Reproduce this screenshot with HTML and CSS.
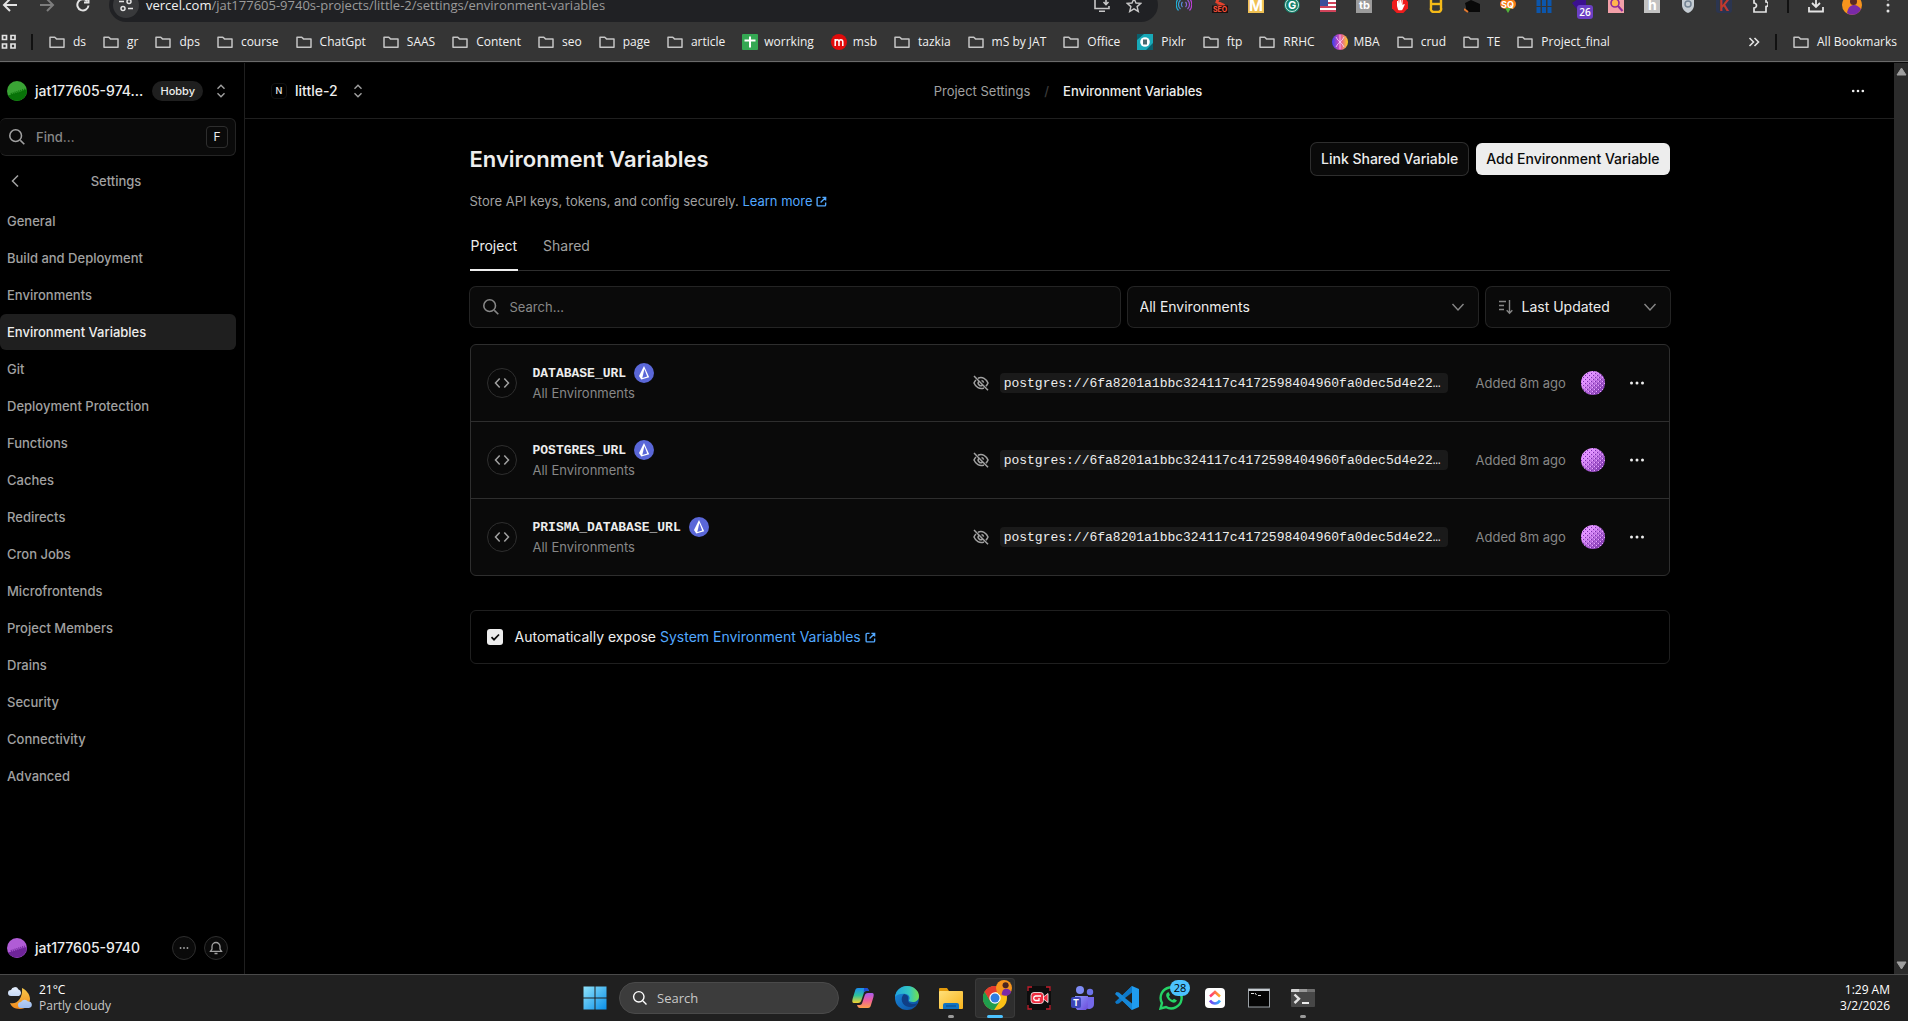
FILE: index.html
```html
<!DOCTYPE html>
<html lang="en">
<head>
<meta charset="utf-8">
<title>Environment Variables – little-2</title>
<link rel="stylesheet" href="styles.css">
</head>
<body>
<svg class="defs" aria-hidden="true">
  <defs>
    <linearGradient id="g-win" x1="0" y1="0" x2="1" y2="1"><stop offset="0" stop-color="#8fe3fb"/><stop offset="1" stop-color="#0a8fe8"/></linearGradient>
    <linearGradient id="g-purple" x1="0" y1="0" x2="1" y2="1"><stop offset="0.3" stop-color="#e08fff"/><stop offset="1" stop-color="#6f2aa0"/></linearGradient>
    <linearGradient id="g-file" x1="0" y1="0" x2="1" y2="1"><stop offset="0" stop-color="#ffe07a"/><stop offset="1" stop-color="#f9b41b"/></linearGradient>
    <linearGradient id="g-edge" x1="0" y1="0" x2="1" y2="0"><stop offset="0" stop-color="#1fa3e0"/><stop offset="0.6" stop-color="#34c8c0"/><stop offset="1" stop-color="#74e04b"/></linearGradient>
    <linearGradient id="g-edge2" x1="0" y1="0" x2="1" y2="1"><stop offset="0" stop-color="#1b8fe0"/><stop offset="1" stop-color="#0b4a9c"/></linearGradient>
    <linearGradient id="g-cop1" x1="0" y1="0" x2="0" y2="1"><stop offset="0" stop-color="#1a8df0"/><stop offset="0.5" stop-color="#2fc49a"/><stop offset="1" stop-color="#f5d32e"/></linearGradient>
    <linearGradient id="g-cop2" x1="0" y1="0" x2="0" y2="1"><stop offset="0" stop-color="#a95cf0"/><stop offset="0.5" stop-color="#f0609a"/><stop offset="1" stop-color="#ffa04a"/></linearGradient>
    <linearGradient id="g-teams" x1="0" y1="0" x2="1" y2="1"><stop offset="0" stop-color="#8fa0ff"/><stop offset="1" stop-color="#6a45d8"/></linearGradient>
    <linearGradient id="g-moon" x1="0" y1="0" x2="0" y2="1"><stop offset="0" stop-color="#f6c84a"/><stop offset="1" stop-color="#f08a1d"/></linearGradient>
    <linearGradient id="g-cloud" x1="0" y1="0" x2="0" y2="1"><stop offset="0" stop-color="#e6effc"/><stop offset="1" stop-color="#9dbdf0"/></linearGradient>
    <linearGradient id="g-mba" x1="0" y1="0" x2="1" y2="0"><stop offset="0" stop-color="#3b3df0"/><stop offset="0.5" stop-color="#e04bb0"/><stop offset="1" stop-color="#ffd21f"/></linearGradient>
    <linearGradient id="g-cast" x1="0" y1="0" x2="1" y2="0"><stop offset="0" stop-color="#19b7d8"/><stop offset="1" stop-color="#c43bd8"/></linearGradient>
    <linearGradient id="g-up" x1="0" y1="0" x2="1" y2="0"><stop offset="0" stop-color="#ff2f7d"/><stop offset="1" stop-color="#ffb21f"/></linearGradient>
    <linearGradient id="g-down" x1="0" y1="0" x2="1" y2="0"><stop offset="0" stop-color="#7a3df0"/><stop offset="1" stop-color="#2fb4ff"/></linearGradient>
    <pattern id="p-dots" width="4" height="4" patternUnits="userSpaceOnUse"><path d="M0 0h1v1H0zM2 2h1v1H2z" fill="#7b2fb0"/><path d="M3 0h1v1H3zM1 2h1v1H1z" fill="#e8a5ff"/></pattern>
    <symbol id="i-folder" viewBox="0 0 16 16"><path d="M1 3.200h4.800l1.700 1.700h7.500v8.400H1z" fill="none" stroke="#c4c4c4" stroke-width="1.500" stroke-linejoin="round"/></symbol>
    <symbol id="i-search" viewBox="0 0 16 16"><path d="M11 11 14.500 14.500M12 6.800a5.200 5.200 0 1 1-10.400 0 5.200 5.200 0 0 1 10.400 0z" fill="none" stroke="currentColor" stroke-width="1.400"/></symbol>
    <symbol id="i-updown" viewBox="0 0 16 16"><path d="M4.500 5.800 8 2.300l3.500 3.500M4.500 10.200 8 13.700l3.500-3.500" fill="none" stroke="currentColor" stroke-width="1.400"/></symbol>
    <symbol id="i-down" viewBox="0 0 16 16"><path d="m2.500 5 5.500 6 5.500-6" fill="none" stroke="currentColor" stroke-width="1.400"/></symbol>
    <symbol id="i-more" viewBox="0 0 16 16"><circle cx="2.500" cy="8" r="1.500"/><circle cx="8" cy="8" r="1.500"/><circle cx="13.500" cy="8" r="1.500"/></symbol>
    <symbol id="i-ext" viewBox="0 0 12 12"><path d="M5 1.500H2.200a1 1 0 0 0-1 1v7.300a1 1 0 0 0 1 1h7.300a1 1 0 0 0 1-1V7M7 1.500h3.500V5M10.200 1.800 5 7" fill="none" stroke="currentColor" stroke-width="1.500"/></symbol>
    <symbol id="i-code" viewBox="0 0 16 16"><path d="M5.700 3.500 1.500 8l4.200 4.500M10.300 3.500 14.500 8l-4.200 4.500" fill="none" stroke="currentColor" stroke-width="1.500"/></symbol>
    <symbol id="i-eyeoff" viewBox="0 0 16 16"><path d="M1 1l14 14.300M5 3.200C9.500 1.200 13.300 4 15 8c-.5 1.200-1.200 2.300-2.100 3.100M11 13C6.500 14.800 2.700 12 1 8c.5-1.200 1.200-2.200 2-3M6 6.200a2.600 2.600 0 0 0 3.700 3.700M8.500 5.400A2.600 2.600 0 0 1 10.600 7.600" fill="none" stroke="currentColor" stroke-width="1.500"/></symbol>
    <symbol id="i-prisma" viewBox="0 0 20 20"><circle cx="10" cy="10" r="10" fill="#5a67d8"/><path d="M10 3 5 12.900 7.300 16.500l7.900-2.300z" fill="#fff"/><path d="M10.400 6 8.300 15l4.900-1.500z" fill="#5a67d8"/></symbol>
    <symbol id="i-avatar" viewBox="0 0 24 24"><circle cx="12" cy="12" r="12" fill="url(#g-purple)"/><circle cx="12" cy="12" r="12" fill="url(#p-dots)"/></symbol>
  </defs>
</svg>

<header class="browser">
  <div class="toolbar">
    <div class="nav-buttons">
      <button class="icon-btn" aria-label="Back"><svg width="18" height="18" viewBox="0 0 18 18"><path d="M17 9H4M10 3 4 9l6 6" fill="none" stroke="#e3e3e3" stroke-width="2"/></svg></button>
      <button class="icon-btn" aria-label="Forward"><svg width="18" height="18" viewBox="0 0 18 18"><path d="M3 9h13M10 3l6 6-6 6" fill="none" stroke="#7d7d7d" stroke-width="2"/></svg></button>
      <button class="icon-btn" aria-label="Reload"><svg width="18" height="18" viewBox="0 0 18 18"><path d="M14.500 9.500A5.600 5.600 0 1 1 13 5M14.500 2v4.500H10" fill="none" stroke="#e3e3e3" stroke-width="2"/></svg></button>
    </div>
    <div class="address">
      <span class="site-info"><svg width="14" height="14" viewBox="0 0 14 14"><path d="M0 3.500h5M9 10.500h5" stroke="#e3e3e3" stroke-width="1.600"/><circle cx="10" cy="3.500" r="2" fill="none" stroke="#e3e3e3" stroke-width="1.500"/><circle cx="4" cy="10.500" r="2" fill="none" stroke="#e3e3e3" stroke-width="1.500"/></svg></span>
      <span class="url"><b>vercel.com</b>/jat177605-9740s-projects/little-2/settings/environment-variables</span>
      <svg width="16" height="16" viewBox="0 0 16 16"><path d="M8 1.500H1v10h14V9M5 14.300h6M12 1v6M9.500 5 12 7.500 14.500 5" fill="none" stroke="#c7c7c7" stroke-width="1.600"/></svg>
      <svg width="16" height="16" viewBox="0 0 16 16"><path d="m8 1.500 2 4.500 4.800.4-3.700 3.200 1.200 4.800L8 11.800l-4.300 2.600 1.200-4.800L1.200 6.400 6 6z" fill="none" stroke="#c7c7c7" stroke-width="1.400"/></svg>
    </div>
    <div class="extensions">
      <svg viewBox="0 0 16 16"><path d="M4.500 3a6 6 0 0 0 0 9M11.500 3a6 6 0 0 1 0 9M6.500 5a3.500 3.500 0 0 0 0 5M9.500 5a3.500 3.500 0 0 1 0 5M2.500 1.500a9 9 0 0 0 0 12M13.500 1.500a9 9 0 0 1 0 12" fill="none" stroke="url(#g-cast)" stroke-width="1.200"/></svg>
      <svg viewBox="0 0 16 16"><path d="M12 1 6 2 5 5l6 3-1 2-5-1" fill="none" stroke="#e5432d" stroke-width="3"/><rect y="8.500" width="16" height="7.500" fill="#1a1010"/><text x="1" y="15" class="t7" fill="#ff5038">SEO</text></svg>
      <svg viewBox="0 0 16 16"><rect width="16" height="16" fill="#f0c052"/><text x="1" y="14" class="t15" fill="#fff">M</text></svg>
      <svg viewBox="0 0 16 16"><circle cx="8" cy="8" r="8" fill="#12806a"/><circle cx="8" cy="8" r="6.500" fill="none" stroke="#fff" stroke-width="0.800"/><text x="4" y="12" class="t11" fill="#fff">G</text></svg>
      <svg viewBox="0 0 16 16"><rect y="1" width="16" height="14" fill="#fff"/><path d="M0 2h16M0 6h16M0 10h16M0 14h16" stroke="#d0435a" stroke-width="2"/><rect y="1" width="8" height="8" fill="#3d4f9a"/></svg>
      <svg viewBox="0 0 16 16"><rect width="16" height="16" fill="#9b9b9b"/><text x="3" y="12" class="t11" fill="#fff">tb</text></svg>
      <svg viewBox="0 0 16 16"><path d="M4.700 0h6.600L16 4.700v6.600L11.300 16H4.700L0 11.300V4.700z" fill="#ef1c1c"/><path d="M5 9V4h1v3l.5-4.500h1V7L8 2h1v5l.7-4h1l-.2 5 1.700-1 .6.600-2.300 4.800c-1 1.300-4 1.200-4.500 0z" fill="#fff"/></svg>
      <svg viewBox="0 0 16 16"><path d="M3 0h10v11a3 3 0 0 1-3 4H6a3 3 0 0 1-3-4z" fill="none" stroke="#f5ba18" stroke-width="2.400"/><path d="M3 7h10" stroke="#f5ba18" stroke-width="2.400"/></svg>
      <svg viewBox="0 0 16 16"><path d="M1 6 7 3l9 4v8H2v-5z" fill="#090909"/><path d="M0 12l4 3" stroke="#e57a30" stroke-width="2"/></svg>
      <svg viewBox="0 0 16 16"><rect y="2" width="16" height="10" rx="5" fill="#f77b17"/><path d="M5 11h6l-3 5z" fill="#53b53a"/><text x="1" y="11" class="t10" fill="#fff">SQ</text></svg>
      <svg viewBox="0 0 16 16"><path d="M2.500 0v16M8 0v16M13.500 0v16" stroke="#0c56ac" stroke-width="4" stroke-dasharray="9 1"/></svg>
      <span class="ext-badged"><svg viewBox="0 0 16 16"><path d="M0 6 6 2l8-2v10l-6 6z" fill="#3b108f"/></svg><span class="ext-badge">26</span></span>
      <svg viewBox="0 0 16 16"><rect width="16" height="16" fill="#f3a0a8"/><circle cx="7" cy="6" r="4" fill="#ffb64d" stroke="#8f2b9a" stroke-width="1.600"/><path d="m10 9 4.500 5" stroke="#8f2b9a" stroke-width="2"/></svg>
      <svg viewBox="0 0 16 16"><rect width="16" height="16" fill="#c2c2c2"/><text x="4" y="13" class="t14" fill="#fff">h</text></svg>
      <svg viewBox="0 0 16 16"><path d="M2 2h12v6c0 4-3 7-6 8-3-1-6-4-6-8z" fill="#c5ccd2"/><circle cx="8" cy="7" r="3" fill="none" stroke="#738393" stroke-width="1.500"/></svg>
      <svg viewBox="0 0 16 16"><rect width="16" height="16" rx="3" fill="#2b3550"/><text x="3" y="14" class="t14" fill="#c0392b">K</text></svg>
      <svg viewBox="0 0 16 16"><path d="M2 1h12v4a2 2 0 0 1 0 4.500V15H2v-4a2.500 2.500 0 0 0 0-5z" fill="none" stroke="#e3e3e3" stroke-width="1.700"/></svg>
      <i class="divider"></i>
      <svg viewBox="0 0 16 16"><path d="M8 0v9M4 6l4 4 4-4M1 10v4.500h14V10" fill="none" stroke="#e3e3e3" stroke-width="1.800"/></svg>
      <svg class="profile" viewBox="0 0 20 20"><circle cx="10" cy="10" r="10" fill="#f7941d"/><circle cx="11.500" cy="6.500" r="3.500" fill="#5a2a22"/><path d="M5 18c1-6 4-8 7-8s5 2 7 4c-2 5-9 8-14 4z" fill="#7a2aa8"/></svg>
      <svg viewBox="0 0 16 16"><g fill="#e3e3e3"><circle cx="8" cy="2" r="1.500"/><circle cx="8" cy="8" r="1.500"/><circle cx="8" cy="14" r="1.500"/></g></svg>
    </div>
  </div>

  <nav class="bookmarks" aria-label="Bookmarks">
    <button class="icon-btn" aria-label="Tab groups"><svg width="16" height="16" viewBox="0 0 16 16"><path d="M2.500 1.500h4v4h-4zM11 1.500h4v4h-4zM2.500 10h4v4h-4zM11 10h4v4h-4z" fill="none" stroke="#e3e3e3" stroke-width="1.700"/></svg></button>
    <i class="divider"></i>
    <div class="marks">
      <a href="#"><svg><use href="#i-folder"/></svg>ds</a>
      <a href="#"><svg><use href="#i-folder"/></svg>gr</a>
      <a href="#"><svg><use href="#i-folder"/></svg>dps</a>
      <a href="#"><svg><use href="#i-folder"/></svg>course</a>
      <a href="#"><svg><use href="#i-folder"/></svg>ChatGpt</a>
      <a href="#"><svg><use href="#i-folder"/></svg>SAAS</a>
      <a href="#"><svg><use href="#i-folder"/></svg>Content</a>
      <a href="#"><svg><use href="#i-folder"/></svg>seo</a>
      <a href="#"><svg><use href="#i-folder"/></svg>page</a>
      <a href="#"><svg><use href="#i-folder"/></svg>article</a>
      <a href="#" class="site"><svg viewBox="0 0 16 16"><rect width="16" height="16" rx="1" fill="#34a853"/><path d="M8 2.500v11M2.500 6.500h11" stroke="#fff" stroke-width="2"/></svg>worrking</a>
      <a href="#" class="site"><svg viewBox="0 0 16 16"><circle cx="8" cy="8" r="8" fill="#e00b0b"/><path d="M4.200 12V5M4.200 8c0-3 3.800-3 3.800 0v4M8 8c0-3 3.800-3 3.800 0v4" fill="none" stroke="#fff" stroke-width="1.500"/></svg>msb</a>
      <a href="#"><svg><use href="#i-folder"/></svg>tazkia</a>
      <a href="#"><svg><use href="#i-folder"/></svg>mS by JAT</a>
      <a href="#"><svg><use href="#i-folder"/></svg>Office</a>
      <a href="#"><svg viewBox="0 0 16 16"><rect width="16" height="16" fill="#18a9b8"/><path d="M0 0h7L0 6zM16 9v7H9z" fill="#0a5f6c"/><circle cx="8" cy="8" r="4.800" fill="#fff"/><rect x="6" y="5.500" width="4" height="5" fill="#4a6a70"/></svg>Pixlr</a>
      <a href="#"><svg><use href="#i-folder"/></svg>ftp</a>
      <a href="#"><svg><use href="#i-folder"/></svg>RRHC</a>
      <a href="#" class="site"><svg viewBox="0 0 16 16"><circle cx="8" cy="8" r="8" fill="url(#g-mba)"/><path d="M4 3c2 5 6 5 8 10M12 3c-2 5-6 5-8 10M8 1v14" fill="none" stroke="#f3d6ff" stroke-width="0.800"/></svg>MBA</a>
      <a href="#"><svg><use href="#i-folder"/></svg>crud</a>
      <a href="#"><svg><use href="#i-folder"/></svg>TE</a>
      <a href="#"><svg><use href="#i-folder"/></svg>Project_final</a>
    </div>
    <button class="icon-btn overflow" aria-label="More bookmarks"><svg width="12" height="12" viewBox="0 0 12 12"><path d="m1.500 2 4 4-4 4M6.500 2l4 4-4 4" fill="none" stroke="#e3e3e3" stroke-width="1.600"/></svg></button>
    <i class="divider"></i>
    <a class="all" href="#"><svg><use href="#i-folder"/></svg>All Bookmarks</a>
  </nav>
</header>

<div class="app">
  <aside class="sidebar">
    <div class="team">
      <svg width="20" height="20" viewBox="0 0 20 20"><circle cx="10" cy="10" r="10" fill="#3aa335"/><path d="M1 14.500 7 12.500 13 11l6.700-3A10 10 0 0 1 1.300 15z" fill="#087308"/><path d="M4 13.500 18 9" stroke="#087308" stroke-width="3" stroke-dasharray="1 1"/></svg>
      <span class="team-name">jat177605-974…</span>
      <span class="plan">Hobby</span>
      <button class="icon-btn muted" aria-label="Switch team"><svg width="16" height="16"><use href="#i-updown"/></svg></button>
    </div>
    <label class="find">
      <svg width="18" height="18"><use href="#i-search"/></svg>
      <input type="text" placeholder="Find…" aria-label="Find">
      <kbd>F</kbd>
    </label>
    <div class="section">
      <button class="icon-btn muted" aria-label="Back to project"><svg width="16" height="16" viewBox="0 0 16 16"><path d="M11 2.500 5.500 8l5.500 5.500" fill="none" stroke="currentColor" stroke-width="1.500"/></svg></button>
      <span>Settings</span>
    </div>
    <nav class="menu" aria-label="Settings">
      <a href="#">General</a>
      <a href="#">Build and Deployment</a>
      <a href="#">Environments</a>
      <a href="#" class="active" aria-current="page">Environment Variables</a>
      <a href="#">Git</a>
      <a href="#">Deployment Protection</a>
      <a href="#">Functions</a>
      <a href="#">Caches</a>
      <a href="#">Redirects</a>
      <a href="#">Cron Jobs</a>
      <a href="#">Microfrontends</a>
      <a href="#">Project Members</a>
      <a href="#">Drains</a>
      <a href="#">Security</a>
      <a href="#">Connectivity</a>
      <a href="#">Advanced</a>
    </nav>
    <div class="user">
      <svg width="20" height="20" viewBox="0 0 20 20"><circle cx="10" cy="10" r="10" fill="#b05cd6"/><path d="M1 14.500 7 13l6-2 6.700-2A10 10 0 0 1 1.300 15z" fill="#6f2499"/><path d="M4 13.500 18 9" stroke="#6f2499" stroke-width="3" stroke-dasharray="1 1"/></svg>
      <span class="user-name">jat177605-9740</span>
      <button class="round" aria-label="Account menu"><svg width="10" height="10"><use href="#i-more"/></svg></button>
      <button class="round" aria-label="Notifications"><svg width="14" height="14" viewBox="0 0 14 14"><path d="M1.500 10.300h11L11 8V5.500a4 4 0 0 0-8 0V8zM5.500 12.500h3" fill="none" stroke="currentColor" stroke-width="1.300"/></svg></button>
    </div>
  </aside>

  <main>
    <header class="topbar">
      <div class="project">
        <span class="framework">N</span>
        <span>little-2</span>
        <button class="icon-btn muted" aria-label="Switch project"><svg width="16" height="16"><use href="#i-updown"/></svg></button>
      </div>
      <nav class="crumbs" aria-label="Breadcrumb"><a href="#">Project Settings</a><i>/</i><span>Environment Variables</span></nav>
      <button class="icon-btn more" aria-label="More"><svg width="14" height="14"><use href="#i-more"/></svg></button>
    </header>

    <div class="content">
      <div class="title-row">
        <h1>Environment Variables</h1>
        <button class="btn secondary">Link Shared Variable</button>
        <button class="btn primary">Add Environment Variable</button>
      </div>
      <p class="lead">Store API keys, tokens, and config securely. <a href="#">Learn more <svg width="11" height="11"><use href="#i-ext"/></svg></a></p>
      <nav class="tabs" aria-label="Scope"><a href="#" class="active">Project</a><a href="#">Shared</a></nav>

      <div class="filters">
        <label class="field"><svg width="18" height="18"><use href="#i-search"/></svg><input type="text" placeholder="Search…" aria-label="Search"></label>
        <label class="field"><select aria-label="Environment"><option>All Environments</option></select><svg width="16" height="16"><use href="#i-down"/></svg></label>
        <label class="field"><svg width="16" height="16" viewBox="0 0 16 16"><path d="M1 2.500h7M1 6.500h5M1 10.500h5M11.500 1v13M8.700 11.200l2.800 3 2.800-3" fill="none" stroke="currentColor" stroke-width="1.400"/></svg><select aria-label="Sort by"><option>Last Updated</option></select><svg width="16" height="16"><use href="#i-down"/></svg></label>
      </div>

      <ul class="vars">
        <li>
          <span class="kind"><svg width="16" height="16"><use href="#i-code"/></svg></span>
          <div class="info"><div class="name"><span>DATABASE_URL</span><svg width="20" height="20"><use href="#i-prisma"/></svg></div><div class="scope">All Environments</div></div>
          <button class="icon-btn muted" aria-label="Hide value"><svg width="16" height="16"><use href="#i-eyeoff"/></svg></button>
          <code>postgres://6fa8201a1bbc324117c4172598404960fa0dec5d4e22…</code>
          <time>Added 8m ago</time>
          <svg width="24" height="24"><use href="#i-avatar"/></svg>
          <button class="icon-btn more" aria-label="Variable menu"><svg width="16" height="16"><use href="#i-more"/></svg></button>
        </li>
        <li>
          <span class="kind"><svg width="16" height="16"><use href="#i-code"/></svg></span>
          <div class="info"><div class="name"><span>POSTGRES_URL</span><svg width="20" height="20"><use href="#i-prisma"/></svg></div><div class="scope">All Environments</div></div>
          <button class="icon-btn muted" aria-label="Hide value"><svg width="16" height="16"><use href="#i-eyeoff"/></svg></button>
          <code>postgres://6fa8201a1bbc324117c4172598404960fa0dec5d4e22…</code>
          <time>Added 8m ago</time>
          <svg width="24" height="24"><use href="#i-avatar"/></svg>
          <button class="icon-btn more" aria-label="Variable menu"><svg width="16" height="16"><use href="#i-more"/></svg></button>
        </li>
        <li>
          <span class="kind"><svg width="16" height="16"><use href="#i-code"/></svg></span>
          <div class="info"><div class="name"><span>PRISMA_DATABASE_URL</span><svg width="20" height="20"><use href="#i-prisma"/></svg></div><div class="scope">All Environments</div></div>
          <button class="icon-btn muted" aria-label="Hide value"><svg width="16" height="16"><use href="#i-eyeoff"/></svg></button>
          <code>postgres://6fa8201a1bbc324117c4172598404960fa0dec5d4e22…</code>
          <time>Added 8m ago</time>
          <svg width="24" height="24"><use href="#i-avatar"/></svg>
          <button class="icon-btn more" aria-label="Variable menu"><svg width="16" height="16"><use href="#i-more"/></svg></button>
        </li>
      </ul>

      <div class="expose">
        <span class="check"><input type="checkbox" id="expose" checked><svg width="16" height="16" viewBox="0 0 16 16"><path d="m4.500 8.200 2.500 2.500 5-5.200" fill="none" stroke="#0a0a0a" stroke-width="1.700"/></svg></span>
        <span><label for="expose">Automatically expose</label> <a href="#">System Environment Variables <svg width="11" height="11"><use href="#i-ext"/></svg></a></span>
      </div>
    </div>
  </main>

  <div class="scrollbar" aria-hidden="true">
    <svg width="11" height="9" viewBox="0 0 11 9"><path d="M5.500 1 10 8H1z" fill="#a0a0a0" stroke="#a0a0a0" stroke-linejoin="round"/></svg>
    <svg width="11" height="9" viewBox="0 0 11 9"><path d="M5.500 8 10 1H1z" fill="#a0a0a0" stroke="#a0a0a0" stroke-linejoin="round"/></svg>
  </div>
</div>

<footer class="taskbar">
  <div class="weather">
    <svg width="24" height="24" viewBox="0 0 24 24"><path d="M14 2c4 2 8 6 8 11S18 23 12 23 3 20 2 17c7 2 13-5 12-15z" fill="url(#g-moon)"/><path d="M3 10a3 3 0 0 1 0-6 4 4 0 0 1 7.500-.5A3.500 3.500 0 0 1 11 10zM13 22a3 3 0 0 1 0-6 4 4 0 0 1 7-.5A3.200 3.200 0 0 1 21 22z" fill="url(#g-cloud)"/></svg>
    <div><div class="temp">21°C</div><div class="sky">Partly cloudy</div></div>
  </div>
  <div class="dock">
    <button class="app-btn" aria-label="Start"><svg viewBox="0 0 24 24"><path d="M.5.500h11v11H.5zM12.500.500h11v11h-11zM.5 12.500h11v11H.5zM12.500 12.500h11v11h-11z" fill="url(#g-win)"/></svg></button>
    <label class="task-search"><svg width="16" height="16"><use href="#i-search"/></svg><input type="text" placeholder="Search" aria-label="Search Windows"></label>
    <button class="app-btn" aria-label="Copilot"><svg viewBox="0 0 24 24"><path d="M7 2h8c2 0 2.500 1.500 3 3h-2.500c-2 0-2.500 1-3 3l-2 6c-.6 2-1.500 3-3.500 3H3c-2 0-2-2-1.300-4.500L4 5c.5-2 1.200-3 3-3z" fill="url(#g-cop1)"/><path d="M17 22H9c-2 0-2.500-1.500-3-3h2.500c2 0 2.500-1 3-3l2-6c.6-2 1.500-3 3.500-3h4c2 0 2 2 1.300 4.500L20 19c-.5 2-1.200 3-3 3z" fill="url(#g-cop2)"/><path d="M13 2h2c2 0 2.500 1.500 3 3h-2.500c-1.500 0-2.300.5-2.800 2z" fill="#1f4bd8"/></svg></button>
    <button class="app-btn" aria-label="Edge"><svg viewBox="0 0 24 24"><circle cx="12" cy="12" r="12" fill="url(#g-edge2)"/><path d="M0 11C1 4 6 0 12 0c7 0 12 5 12 10 0 4-3 6-6 6-3 0-4.500-1-4-2 1-1 1-5-3-6-4-.8-9 0-11 3z" fill="url(#g-edge)"/><path d="M9 8c-4 3-3 12 5 13 4 .5 7-1 9-4-4 2-11 1-10-4 .5-2 0-4-4-5z" fill="#0f3f86"/></svg></button>
    <button class="app-btn" aria-label="File Explorer"><svg viewBox="0 0 24 24"><path d="M0 3a1 1 0 0 1 1-1h7l2 3h13v4H0z" fill="#e39a0b"/><rect y="5" width="24" height="18" rx="1" fill="url(#g-file)"/><path d="M4 23v-4a2 2 0 0 1 2-2h12a2 2 0 0 1 2 2v4z" fill="#1173c5"/><path d="M7 20h10" stroke="#0a4a8a"/></svg><i class="running"></i></button>
    <button class="app-btn current" aria-label="Chrome"><svg viewBox="0 0 24 24"><circle cx="12" cy="12" r="12" fill="#fbc116"/><path d="M1.600 6A12 12 0 0 1 22.400 6H12z" fill="#e33b2e"/><path d="M1.600 6A12 12 0 0 0 11 24l6-9-10-.5z" fill="#1f9d4d"/><path d="M1.600 6A12 12 0 0 1 12 0v9L6.800 15z" fill="#e33b2e"/><path d="M1.600 6 7 15l5 2.500L11 24A12 12 0 0 1 1.600 6z" fill="#1f9d4d"/><circle cx="12" cy="12" r="5.700" fill="#fff"/><circle cx="12" cy="12" r="4.500" fill="#2f7de1"/></svg><svg class="mini" viewBox="0 0 20 20"><circle cx="10" cy="10" r="10" fill="#f7941d"/><circle cx="12" cy="6.500" r="3.800" fill="#4a2420"/><path d="M7 18c1-6 3-7 6-7s5 2 6 4c-2 5-7 6-12 3z" fill="#7a2aa8"/></svg><i class="running"></i></button>
    <button class="app-btn" aria-label="Screen recorder"><svg viewBox="0 0 24 24"><rect width="24" height="24" rx="3" fill="#0d0d0d"/><path d="M1 5V1h4M19 1h4v4M1 19v4h4M19 23h4v-4" fill="none" stroke="#c41f2e" stroke-width="1.300"/><path d="m15 12 6-4.500v9z" fill="#ee2d40" stroke="#fff" stroke-width="0.800"/><rect x="4" y="6.500" width="12.500" height="11" rx="3" fill="#ee2d40" stroke="#fff" stroke-width="0.800"/><path d="M14 10H8.500a2.300 2.300 0 0 0 0 4.500H12V12" fill="none" stroke="#fff" stroke-width="1.300"/></svg></button>
    <button class="app-btn" aria-label="Teams"><svg viewBox="0 0 24 24"><circle cx="9" cy="4" r="4" fill="#7f8cf5"/><circle cx="19" cy="6" r="3.200" fill="#6d74e8"/><path d="M14 11h9v7a5 5 0 0 1-9 3z" fill="#7468e8"/><path d="M4 10h13v8a6 6 0 0 1-13 2z" fill="url(#g-teams)"/><rect y="11" width="10" height="11" rx="2" fill="#3c46b8"/><text x="2" y="20" class="t10" fill="#fff">T</text></svg></button>
    <button class="app-btn" aria-label="VS Code"><svg viewBox="0 0 24 24"><path d="M17 0 24 3v18l-7 3L5 12z" fill="#1f9cf0"/><path d="M17 0v6.500L4 17.500 1.500 18 0 16z" fill="#0d78c8"/><path d="M17 24v-6.500L4 6.500 1.500 6 0 8z" fill="#1688d8"/><path d="M17 6.500v11L10 12z" fill="#202020"/></svg></button>
    <button class="app-btn" aria-label="WhatsApp"><svg viewBox="0 0 24 24"><path d="M1.500 22.500 3 17A10.500 10.500 0 1 1 7 21z" fill="none" stroke="#25d366" stroke-width="2.400"/><path d="M8 7c-2 2 0 6 3 8s5 2.500 7-.5l-3-1.800-1.500 1.300c-1.500-.5-3-2-3.700-3.500L11 9 9.500 6z" fill="#25d366"/></svg><span class="task-badge">28</span></button>
    <button class="app-btn" aria-label="ClickUp"><svg viewBox="0 0 24 24"><rect x="2" y="2" width="20" height="20" rx="4" fill="#fff"/><path d="m7 10.500 5-4.500 5 4.500" fill="none" stroke="url(#g-up)" stroke-width="2.500"/><path d="M7 14.500c2.700 4 7.300 4 10 0" fill="none" stroke="url(#g-down)" stroke-width="2.600"/></svg></button>
    <button class="app-btn" aria-label="Command Prompt"><svg viewBox="0 0 24 24"><rect x="1.500" y="3" width="21" height="18" fill="#050505" stroke="#9aa0a5"/><path d="M1.500 4h21" stroke="#c5cbd0" stroke-width="2"/><path d="M4 7.500h3M8 7l1.500 2M11 9.500h3" stroke="#ddd"/></svg></button>
    <button class="app-btn" aria-label="Terminal"><svg viewBox="0 0 24 24"><rect y="3" width="24" height="18" rx="1" fill="#474747"/><path d="M0 6V4a1 1 0 0 1 1-1h7v3z" fill="#d0d0d0"/><path d="M8 3h8v3H8z" fill="#999"/><path d="M16 3h7a1 1 0 0 1 1 1v2h-8z" fill="#6f6f6f"/><path d="m3.500 8.500 4.500 4.300-4.500 4.200" fill="none" stroke="#e2e2e2" stroke-width="2.400"/><path d="M11 17h7" stroke="#fff" stroke-width="1.800"/></svg><i class="running"></i></button>
  </div>
  <div class="clock"><div>1:29 AM</div><div>3/2/2026</div></div>
</footer>
</body>
</html>
```

FILE: styles.css
```css
:root {
  --system: "Open Sans", "Noto Sans", sans-serif;
  --ui: Inter, "Liberation Sans", sans-serif;
  --mono: "Liberation Mono", "DejaVu Sans Mono", monospace;
  --text: #ededed;
  --muted: #a1a1a1;
  --dim: #878787;
  --line: #1f1f1f;
  --line-strong: #2e2e2e;
  --surface: #0a0a0a;
  --link: #52a8ff;
}

* { box-sizing: border-box; }

body {
  margin: 0;
  min-height: 100vh;
  display: flex;
  flex-direction: column;
  background: #000;
  color: var(--text);
  font: 13px/20px var(--ui);
  overflow: hidden;
}

svg { flex: none; display: block; }
.defs { position: absolute; width: 0; height: 0; }
a { color: inherit; text-decoration: none; }
button, input, select { font: inherit; color: inherit; }
i { font-style: normal; }

.icon-btn {
  display: flex;
  align-items: center;
  justify-content: center;
  flex: none;
  padding: 0;
  border: 0;
  background: none;
}
.muted { color: var(--muted); }
.more { fill: var(--text); }

/* Browser window */
.browser {
  overflow: hidden;
  background: #353535;
  color: #f1f1f1;
  font-family: var(--system);
  border-bottom: 1px solid #6a6a6a;
}
.toolbar {
  display: flex;
  align-items: center;
  height: 34px;
  margin-top: -12px;
  padding-right: 12px;
}
.nav-buttons { display: flex; gap: 19px; padding-right: 17px; }
.address {
  flex: 1;
  display: flex;
  align-items: center;
  gap: 16px;
  height: 34px;
  padding: 0 16px 0 4px;
  margin-right: 18px;
  border-radius: 17px;
  background: #202124;
}
.site-info {
  display: grid;
  place-items: center;
  width: 26px;
  height: 26px;
  border-radius: 13px;
  background: #38393b;
}
.url {
  flex: 1;
  margin-left: -9px;
  font-size: 13px;
  color: #9b9b9b;
  white-space: nowrap;
}
.url b { font-weight: 400; color: #f1f1f1; }
.extensions { display: flex; align-items: center; gap: 20px; }
.extensions svg { width: 16px; height: 16px; }
.extensions .profile { width: 20px; height: 20px; margin: 0 -2px; }
.ext-badged { position: relative; }
.ext-badge {
  position: absolute;
  left: 5px;
  top: 8px;
  width: 16px;
  border-radius: 3px;
  background: #6b3fc4;
  color: #fff;
  font: 600 10px/14px var(--system);
  text-align: center;
}
.divider { width: 2px; height: 16px; background: #111; flex: none; }
.extensions .divider { margin: 0 -1px; }
.t7 { font: 700 7px var(--ui); }
.t10 { font: 700 9px var(--ui); }
.t11 { font: 700 11px var(--ui); }
.t14 { font: 700 14px var(--ui); }
.t15 { font: 700 15px var(--ui); }

.bookmarks {
  display: flex;
  align-items: center;
  height: 39px;
  padding: 0 11px 0 0;
  font-size: 12px;
}
.bookmarks > .divider { margin: 0 16px 0 15px; }
.marks {
  flex: 1;
  display: flex;
  gap: 17px;
  min-width: 0;
  overflow: hidden;
}
.bookmarks a { display: flex; align-items: center; gap: 8px; white-space: nowrap; }
.bookmarks .site { gap: 6px; }
.bookmarks a svg { width: 16px; height: 16px; }

/* Dashboard */
.app { flex: 1; display: flex; border-top: 1px solid #0a0a0a; }
.sidebar {
  display: flex;
  flex-direction: column;
  width: 245px;
  padding-right: 8px;
  border-right: 1px solid var(--line);
  font-weight: 500;
}
.team { display: flex; align-items: center; height: 55px; padding: 0 7px; }
.team-name { flex: 1; padding-left: 8px; font-size: 14px; white-space: nowrap; }
.plan {
  padding: 0 8px;
  margin-right: 10px;
  border-radius: 10px;
  background: #1f1f1f;
  font-size: 11px;
}
.find {
  display: flex;
  align-items: center;
  gap: 10px;
  height: 38px;
  padding: 0 7px 0 8px;
  border: 1px solid #242424;
  border-left: 0;
  border-radius: 6px;
  background: var(--surface);
  color: var(--muted);
}
input { border: 0; outline: 0; padding: 0; background: none; min-width: 0; flex: 1; }
input::placeholder { color: var(--dim); opacity: 1; }
kbd {
  width: 22px;
  border: 1px solid var(--line-strong);
  border-radius: 4px;
  color: var(--text);
  font: 12px/20px var(--ui);
  text-align: center;
}
.section {
  display: grid;
  grid-template-columns: 16px 1fr 16px;
  align-items: center;
  height: 47px;
  padding: 3px 11px 0 7px;
  color: var(--muted);
  text-align: center;
}
.menu { display: flex; flex-direction: column; gap: 1px; flex: 1; }
.menu a { padding: 8px 7px; border-radius: 6px; color: var(--muted); }
.menu .active { background: #1f1f1f; color: var(--text); }
.user { display: flex; align-items: center; gap: 8px; height: 52px; padding: 0 8px 0 7px; }
.user-name { flex: 1; font-size: 14px; }
.round {
  display: grid;
  place-items: center;
  width: 24px;
  height: 24px;
  padding: 0;
  border: 1px solid var(--line-strong);
  border-radius: 12px;
  background: var(--surface);
  color: var(--muted);
  fill: var(--muted);
}

main { flex: 1; min-width: 0; }
.topbar {
  display: grid;
  grid-template-columns: 1fr auto 1fr;
  align-items: center;
  height: 56px;
  padding: 0 29px 0 26px;
  border-bottom: 1px solid var(--line);
  font-weight: 500;
}
.topbar > .more { justify-self: end; }
.project { display: flex; align-items: center; gap: 8px; font-size: 14px; }
.project .icon-btn { margin-left: 4px; }
.framework {
  width: 16px;
  height: 16px;
  border: 1px solid #111;
  border-radius: 4px;
  font: 500 9px/14px var(--ui);
  text-align: center;
}
.crumbs { display: flex; color: var(--muted); }
.crumbs a { font-weight: 400; }
.crumbs i { padding: 0 14px; color: #3a3a3a; }
.crumbs span { color: var(--text); }

.content { max-width: 1200px; margin: 0 auto; padding-top: 24px; }
.title-row { display: flex; align-items: center; gap: 8px; height: 32px; }
h1 { flex: 1; margin: 0; font-size: 22px; line-height: 32px; font-weight: 600; }
.btn {
  height: 32px;
  padding: 0 10px;
  border: 0;
  border-radius: 6px;
  font-size: 14px;
  font-weight: 500;
}
.secondary { background: var(--surface); box-shadow: 0 0 0 1px var(--line-strong); }
.primary { background: var(--text); color: #0a0a0a; }
.lead { margin: 16px 0 22px; color: var(--muted); }
.lead a, .expose a { color: var(--link); }
.lead a svg, .expose a svg { display: inline-block; vertical-align: -1px; }
.tabs {
  display: flex;
  gap: 24px;
  height: 38px;
  border-bottom: 1px solid var(--line-strong);
  color: var(--muted);
  font-size: 14px;
}
.tabs a { height: 38px; padding: 3px 1px; }
.tabs .active { color: var(--text); border-bottom: 2px solid var(--text); }

.filters {
  display: grid;
  grid-template-columns: 1fr 350px 184px;
  gap: 8px;
  padding: 16px 0 17px;
}
.field {
  display: flex;
  align-items: center;
  gap: 8px;
  height: 40px;
  padding: 0 12px;
  border-radius: 6px;
  background: var(--surface);
  box-shadow: 0 0 0 1px #242424;
  color: var(--dim);
}
.field:first-child { gap: 10px; }
select {
  flex: 1;
  min-width: 0;
  padding: 0;
  border: 0;
  appearance: none;
  background: none;
  color: var(--text);
  font-size: 14px;
}

.vars {
  margin: 0;
  padding: 0;
  list-style: none;
  border: 1px solid var(--line-strong);
  border-radius: 6px;
  background: var(--surface);
}
.vars li { display: flex; align-items: center; height: 76px; padding: 0 16px; }
.vars li + li { height: 77px; border-top: 1px solid var(--line-strong); }
.kind {
  display: grid;
  place-items: center;
  width: 30px;
  height: 30px;
  border: 1px solid var(--line-strong);
  border-radius: 15px;
  color: var(--muted);
}
.info { flex: 1; padding-left: 16px; }
.name { display: flex; align-items: center; gap: 8px; font: 700 13px/20px var(--mono); }
.name span { padding-top: 2px; line-height: 18px; }
.scope { color: var(--dim); }
code {
  margin: 0 28px 0 11px;
  padding: 2px 7px 0 4px;
  border-radius: 4px;
  background: #1a1a1a;
  font: 13px/18px var(--mono);
}
time { width: 93px; margin-right: 12px; color: var(--dim); white-space: nowrap; }
.vars .more { margin-left: 16px; width: 32px; height: 32px; }

.expose {
  display: flex;
  align-items: center;
  gap: 12px;
  height: 54px;
  margin-top: 34px;
  padding: 0 16px;
  border: 1px solid var(--line);
  border-radius: 6px;
  font-size: 14px;
}
.check { position: relative; width: 16px; height: 16px; }
.check input {
  display: block;
  width: 16px;
  height: 16px;
  margin: 0;
  appearance: none;
  border-radius: 3px;
  background: var(--text);
}
.check svg { position: absolute; inset: 0; pointer-events: none; }

.scrollbar {
  display: flex;
  flex-direction: column;
  justify-content: space-between;
  align-items: center;
  width: 14px;
  padding: 4px 0;
  background: #2b2b2b;
}

/* Taskbar */
.taskbar {
  display: grid;
  grid-template-columns: 1fr auto 1fr;
  align-items: center;
  height: 47px;
  padding: 0 18px 0 8px;
  border-top: 1px solid #4a4a4a;
  background: #202020;
  font: 12px/16px var(--system);
  color: #fff;
}
.weather { display: flex; align-items: center; gap: 7px; }
.sky { color: #c9c9c9; }
.dock { display: flex; align-items: center; }
.app-btn {
  position: relative;
  display: grid;
  place-items: center;
  width: 40px;
  height: 40px;
  margin: 0 2px;
  padding: 0;
  border: 0;
  border-radius: 4px;
  background: none;
}
.app-btn > svg { width: 24px; height: 24px; }
.current { background: #2e2e2e; box-shadow: inset 0 0 0 1px #3a3a3a; }
.app-btn .mini { position: absolute; right: 3px; top: 2px; width: 16px; height: 16px; }
.running {
  position: absolute;
  bottom: 0;
  left: 17px;
  width: 6px;
  height: 3px;
  border-radius: 2px;
  background: #9a9a9a;
}
.current .running { left: 12px; width: 16px; background: #4cc2ff; }
.task-badge {
  position: absolute;
  left: 19px;
  top: 2px;
  width: 20px;
  border-radius: 8px;
  background: #4cc2ff;
  color: #000;
  font: 11px/16px var(--system);
  text-align: center;
}
.task-search {
  display: flex;
  align-items: center;
  gap: 9px;
  width: 220px;
  height: 32px;
  margin: 0 2px;
  padding: 0 12px;
  border: 1px solid #4a4a4a;
  border-radius: 16px;
  background: #3c3c3c;
  font-size: 13px;
}
.task-search input::placeholder { color: #c8c8c8; }
.clock { text-align: right; }
```
